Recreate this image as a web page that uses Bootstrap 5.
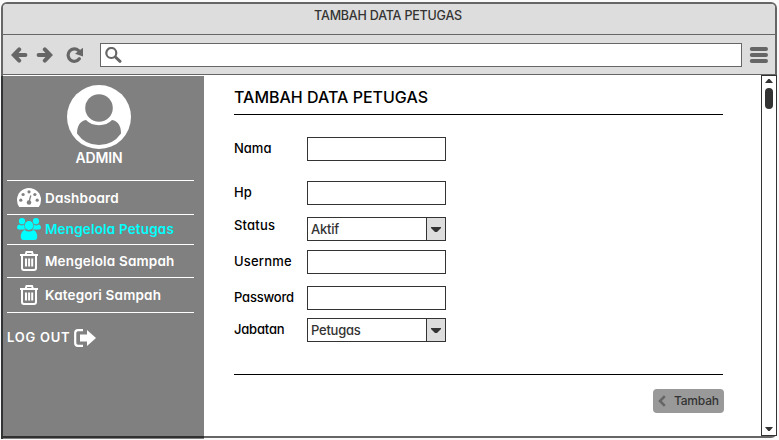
<!DOCTYPE html>
<html lang="id">
<head>
<meta charset="utf-8">
<meta name="viewport" content="width=device-width, initial-scale=1">
<title>Tambah Data Petugas</title>
<link href="https://cdn.jsdelivr.net/npm/bootstrap@5.3.0/dist/css/bootstrap.min.css" rel="stylesheet">
<style>
html,body{height:440px;overflow:hidden}
body{font-family:Inter,"Liberation Sans",sans-serif;font-feature-settings:"cv11";font-size:13px;font-weight:500;line-height:16px;color:#000;background:#fafafa}
svg{display:block;flex:none}
.window{width:776px;height:436px;margin:2px 0 0 1px;border:2px solid #666;border-radius:6px;background:#fff}
.titlebar{height:31px;background:#ddd;border-bottom:1px solid #666;border-radius:4px 4px 0 0;color:#333;padding:4px 2px 0 0;font-size:12.5px;line-height:15px;letter-spacing:-.2px}
.toolbar{height:40px;background:#ddd;border-bottom:1px solid #666;color:#666;padding-left:8px}
.address{width:642px;height:24px;border:1px solid #666;background:#fff;padding:3px 0 0 4px;margin-left:15px}
.viewport{height:361px}
.sidebar{width:203px;height:363px;margin:1px 0 0 -2px;background:#808080;border-left:2px solid #303434;color:#fff;padding:9px 0 0 4px;position:relative}
.sidebar::after{content:"";position:absolute;left:-2px;right:0;bottom:1px;height:2px;background:#303030;border-radius:0 0 0 4px}
.admin{width:184px;font-size:14px;margin-top:1px;font-weight:600;letter-spacing:-.1px}
.menu{width:187px;border-top:1px solid #fff;margin-top:14px;font-size:13.5px;font-weight:600;letter-spacing:.17px}
.menu a{color:#fff;border-bottom:1px solid #fff;padding-left:10px;text-decoration:none}
.menu a.current{color:#0ff}
.menu a.current span,.menu a.current svg{margin-top:-2px}
.menu svg{margin-right:4px}
.logout{margin-top:16px;letter-spacing:.75px;font-weight:600;font-size:13px}
.logout span{margin-top:-2px}
.page{padding:13px 0 0 30px;flex:1}
.heading{font-size:16px;line-height:18px;width:489px;height:27px;border-bottom:1px solid #000}
.field{height:24px}
.field label{width:73px;height:16px;margin-top:3px}
.wide{letter-spacing:.2px}
.tight{letter-spacing:-.2px}
.box{width:139px;height:24px;border:1px solid #333;border-radius:0;background:#fff;padding:0}
.pick{color:#333;padding-left:3px}
.pick .value{margin-top:-1px;letter-spacing:-.25px}
.pick .arrow{width:19px;height:22px;background:#ddd;border-left:1px solid #333}
.footer-line{width:489px;border-top:1px solid #000;margin-top:32px}
.actions{width:490px;margin-top:14px}
.add{width:71px;height:24px;background:#999;border:0;border-radius:4px;color:#333;font-size:12px;font-weight:500;padding:0 0 0 5px}
.scroll{width:16px;height:361px;border:1px solid #333;background:#fff;margin-right:-2px;padding:3px 0 4px}
.thumb{width:8px;height:21px;border-radius:4px;background:#333;margin-top:5px}
</style>
<script src="https://cdn.jsdelivr.net/npm/bootstrap@5.3.0/dist/js/bootstrap.bundle.min.js"></script>
</head>
<body>
<div class="window">
  <header class="titlebar text-center">TAMBAH DATA PETUGAS</header>
  <div class="toolbar d-flex align-items-center">
    <svg width="17" height="16" viewBox="0 0 17 16" fill="none" stroke="#666" stroke-width="4" stroke-linecap="round"><path d="M8.2 2.400 2.800 8l5.400 5.600M3 8h11.400"/></svg>
    <svg class="ms-2" width="17" height="16" viewBox="0 0 17 16" fill="none" stroke="#666" stroke-width="4" stroke-linecap="round"><path d="M8.800 2.400 14.200 8l-5.400 5.600M14 8H2.600"/></svg>
    <svg style="margin-left:13px" width="19" height="16" viewBox="0 0 19 16"><path d="M13.300 11.800A6.200 6.200 0 1 1 12.600 3.600" fill="none" stroke="#666" stroke-width="3.200" stroke-linecap="round"/><path d="M17 .8v8.700L9 6.800z" fill="#666"/></svg>
    <div class="address"><svg width="17" height="16" viewBox="0 0 17 16" fill="none" stroke="#666" stroke-linecap="round"><circle cx="6.300" cy="6" r="5" stroke-width="2.200"/><path d="m10.400 10 4.600 4.300" stroke-width="3"/></svg></div>
    <svg style="margin-left:7px" width="19" height="16" viewBox="0 0 19 16" stroke="#666" stroke-width="4" stroke-linecap="round"><path d="M2.800 2h14.200M2.800 8h14.200M2.800 14h14.200"/></svg>
  </div>
  <div class="viewport d-flex">
    <aside class="sidebar">
      <svg style="margin-left:60px" width="64" height="64" viewBox="0 0 64 64"><circle cx="32" cy="32" r="32" fill="#fff"/><circle cx="32" cy="23" r="13.800" fill="#808080"/><path d="M19 35C13 36 10 41 10 48.500Q18 60 32 60T54 48.500C54 41 51 36 45 35Q40 40.200 32 40.200T19 35Z" fill="#808080"/></svg>
      <div class="admin text-center">ADMIN</div>
      <nav class="menu">
        <a class="d-flex align-items-center" style="height:34px" href="#">
          <svg width="24" height="19" viewBox="0 0 24 19"><path d="M2.200 19Q0 16 0 12a12 12 0 0 1 24 0q0 4-2.200 7z" fill="#fff"/><g fill="#808080"><circle cx="3.800" cy="12.200" r="1.600"/><circle cx="6.100" cy="6.500" r="1.600"/><circle cx="12" cy="3.800" r="1.600"/><circle cx="17.900" cy="6.500" r="1.600"/><circle cx="20.200" cy="12.200" r="1.600"/><circle cx="12" cy="14.500" r="2.300"/></g><path d="m12 14 1.800-6.500" stroke="#808080" stroke-width="1.300"/></svg>
          <span>Dashboard</span></a>
        <a class="d-flex align-items-center current" style="height:30px" href="#">
          <svg width="24" height="22" viewBox="0 0 24 22" fill="#0ff"><circle cx="5" cy="3.200" r="3.100"/><circle cx="19" cy="3.200" r="3.100"/><circle cx="12" cy="7.500" r="4.400"/><path d="M2 6.500q3 2 5 .3 0 3.200 2 4.700H2Q0 11.500 0 9.500T2 6.500zM22 6.500q-3 2-5 .3 0 3.200-2 4.700h7q2 0 2-2t-2-3zM7.500 12q4.500 3 9 0 3.700 1.500 3.700 7 0 3-3 3H6.800q-3 0-3-3 0-5.500 3.700-7z"/></svg>
          <span>Mengelola Petugas</span></a>
        <a class="d-flex align-items-center" style="height:33px" href="#">
          <svg width="24" height="20" viewBox="0 0 24 20" fill="none" stroke="#fff" stroke-width="2"><path d="M3 4h18M8.500 4l1-3h5.500l1 3M5 4v13q0 2 2 2h10q2 0 2-2V4M9 7.500v8M12.100 7.500v8M15.200 7.500v8"/></svg>
          <span>Mengelola Sampah</span></a>
        <a class="d-flex align-items-center" style="height:35px" href="#">
          <svg width="24" height="20" viewBox="0 0 24 20" fill="none" stroke="#fff" stroke-width="2"><path d="M3 4h18M8.500 4l1-3h5.500l1 3M5 4v13q0 2 2 2h10q2 0 2-2V4M9 7.500v8M12.100 7.500v8M15.200 7.500v8"/></svg>
          <span>Kategori Sampah</span></a>
      </nav>
      <div class="logout d-flex align-items-center"><span>LOG OUT</span>
        <svg style="margin-left:4px" width="22" height="18" viewBox="0 0 22 18"><path d="M9 1.200H4Q1.200 1.200 1.200 4v10Q1.200 16.800 4 16.800h5" fill="none" stroke="#fff" stroke-width="2.200"/><path d="M6 5.500h7V1l9 8-9 8v-4.500H6z" fill="#fff"/></svg></div>
    </aside>
    <main class="page">
      <h1 class="heading mb-0">TAMBAH DATA PETUGAS</h1>
      <div class="field d-flex" style="margin-top:22px"><label for="nama">Nama</label><input class="box" id="nama"></div>
      <div class="field d-flex" style="margin-top:20px"><label for="hp">Hp</label><input class="box" id="hp"></div>
      <div class="field d-flex" style="margin-top:12px"><label class="wide mt-0">Status</label><div class="box pick d-flex align-items-center justify-content-between"><span class="value">Aktif</span><span class="arrow d-flex align-items-center justify-content-center"><svg width="10" height="5" viewBox="0 0 10 5"><path d="M0 0h10v1L6 5H4L0 1z" fill="#333"/></svg></span></div></div>
      <div class="field d-flex" style="margin-top:9px"><label class="wide" for="user">Usernme</label><input class="box" id="user"></div>
      <div class="field d-flex" style="margin-top:12px"><label class="tight" for="pass">Password</label><input class="box" id="pass"></div>
      <div class="field d-flex" style="margin-top:8px"><label class="tight">Jabatan</label><div class="box pick d-flex align-items-center justify-content-between"><span class="value">Petugas</span><span class="arrow d-flex align-items-center justify-content-center"><svg width="10" height="5" viewBox="0 0 10 5"><path d="M0 0h10v1L6 5H4L0 1z" fill="#333"/></svg></span></div></div>
      <div class="footer-line"></div>
      <div class="actions d-flex justify-content-end"><button class="add d-flex align-items-center"><svg style="margin-right:8px" width="8" height="12" viewBox="0 0 8 12" fill="none" stroke="#666" stroke-width="2.600"><path d="M6.800 1.200 2 6l4.800 4.800"/></svg><span class="tight">Tambah</span></button></div>
    </main>
    <div class="scroll d-flex flex-column align-items-center">
      <svg width="8" height="4" viewBox="0 0 8 4"><path d="M0 4h8L4.700 0H3.300z" fill="#333"/></svg>
      <div class="thumb"></div>
      <svg class="mt-auto" width="8" height="4" viewBox="0 0 8 4"><path d="M0 0h8L4.700 4H3.300z" fill="#333"/></svg>
    </div>
  </div>
</div>
</body>
</html>
